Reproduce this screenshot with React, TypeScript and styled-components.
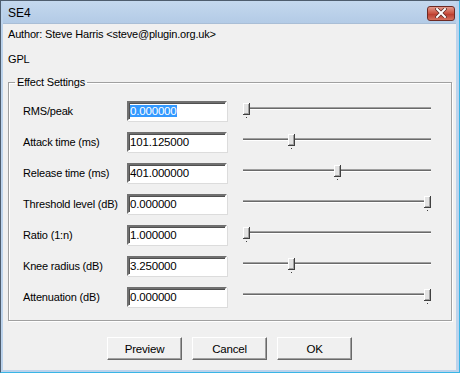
import React from "react";
import styled, { createGlobalStyle } from "styled-components";

const GlobalStyle = createGlobalStyle`
  html, body {
    margin: 0;
    padding: 0;
    background: #f0f0f0;
  }
  body {
    font-family: "Liberation Sans", Arial, sans-serif;
    font-size: 11px;
    letter-spacing: -0.18px;
    color: #000;
  }
`;

const Window = styled.div`
  width: 460px;
  height: 373px;
  box-sizing: border-box;
  display: flex;
  flex-direction: column;
  background: #bcd3ec;
  border: 1px solid #4e5d6e;
  border-right-color: #39b5e6;
  border-bottom-color: #39b5e6;
  padding: 0 3px 2px 2px;
`;

const TitleBar = styled.div`
  height: 22px;
  flex: none;
  display: flex;
  align-items: center;
  justify-content: space-between;
  padding-left: 5px;
  background: linear-gradient(#c4d8ee, #b3cbe6);
`;

const Title = styled.span`
  font-size: 12px;
  letter-spacing: 0;
  margin-top: 2px;
`;

const CloseButton = styled.button`
  width: 28px;
  height: 15px;
  margin: 2px 1px 0 0;
  padding: 0;
  display: flex;
  align-items: center;
  justify-content: center;
  border: 1px solid #6d2a24;
  border-radius: 3px;
  background: linear-gradient(#e39a8c, #c9503e 50%, #b8382a 51%, #d5715e);
`;

const Client = styled.div`
  flex: 1;
  background: #f0f0f0;
  padding: 0 0 0 5px;
  border-top: 1px solid #a9bed6;
`;

const InfoLine = styled.div`
  height: 20px;
  line-height: 20px;
  margin-bottom: 5px;
`;

const Group = styled.fieldset`
  width: 444px;
  box-sizing: border-box;
  margin: 6px 0 0 0;
  padding: 12px 0 13px 0;
  border: 1px solid #a0a0a0;
  box-shadow: 1px 1px 0 #fff, inset 1px 1px 0 #fff;
`;

const Legend = styled.legend`
  margin-left: 6px;
  padding: 0 2px;
  line-height: 14px;
`;

const Rows = styled.div`
  display: grid;
  grid-template-columns: 104px 100px 204px;
  row-gap: 11px;
  align-items: center;
  padding-left: 14px;
`;

const Label = styled.span`
  line-height: 20px;
`;

const Field = styled.div`
  height: 20px;
  box-sizing: border-box;
  background: #fff;
  border-style: solid;
  border-width: 2px;
  border-color: #707070 #fff #fff #707070;
  box-shadow: inset 1px 1px 0 #505050, 1px 1px 0 #dcdcdc;
  padding: 0 1px;
  line-height: 16px;
  font-size: 11.5px;
`;

const Selected = styled.span`
  background: #3399ff;
  color: #fff;
`;

const Slider = styled.div`
  position: relative;
  height: 20px;
  margin-left: 16px;
`;

const Track = styled.div`
  position: absolute;
  left: 0;
  right: 0;
  top: 6px;
  height: 1px;
  background: #6a6a6a;
  border-top: 1px solid #a0a0a0;
  border-bottom: 1px solid #fff;
`;

const Thumb = styled.svg`
  position: absolute;
  top: 2px;
`;

const ButtonRow = styled.div`
  display: flex;
  justify-content: center;
  gap: 10px;
  margin-top: 16px;
  padding-right: 5px;
`;

const Button = styled.button`
  width: 75px;
  height: 23px;
  box-sizing: border-box;
  font-family: "Liberation Sans", Arial, sans-serif;
  font-size: 11.5px;
  letter-spacing: -0.2px;
  background: #f0f0f0;
  border: 1px solid;
  border-color: #fff #696969 #696969 #fff;
  box-shadow: inset -1px -1px 0 #a0a0a0;
  padding: 0;
`;

type Setting = { label: string; value: string; pos: number; selected?: boolean };

const settings: Setting[] = [
  { label: "RMS/peak", value: "0.000000", pos: 0, selected: true },
  { label: "Attack time (ms)", value: "101.125000", pos: 0.249 },
  { label: "Release time (ms)", value: "401.000000", pos: 0.503 },
  { label: "Threshold level (dB)", value: "0.000000", pos: 1 },
  { label: "Ratio (1:n)", value: "1.000000", pos: 0 },
  { label: "Knee radius (dB)", value: "3.250000", pos: 0.249 },
  { label: "Attenuation (dB)", value: "0.000000", pos: 1 },
];

const ThumbIcon = ({ pos }: { pos: number }) => (
  <Thumb width="7" height="15" viewBox="0 0 7 15" style={{ left: Math.round(pos * 181) }}>
    <rect x="0" y="0" width="7" height="12" fill="#404040" />
    <rect x="0" y="0" width="6" height="11" fill="#fff" />
    <rect x="1" y="1" width="5" height="10" fill="#a0a0a0" />
    <rect x="1" y="1" width="4" height="9" fill="#e3e3e3" />
    <rect x="3" y="14" width="1" height="1" fill="#404040" />
  </Thumb>
);

const CloseIcon = () => (
  <svg width="12" height="10" viewBox="0 0 12 10">
    <path d="M2 1 L10 9 M10 1 L2 9" stroke="#5a2a24" strokeWidth="3.4" strokeLinecap="square" />
    <path d="M2 1 L10 9 M10 1 L2 9" stroke="#fff" strokeWidth="2" strokeLinecap="square" />
  </svg>
);

export default function App() {
  return (
    <>
      <GlobalStyle />
      <Window>
        <TitleBar>
          <Title>SE4</Title>
          <CloseButton aria-label="Close">
            <CloseIcon />
          </CloseButton>
        </TitleBar>
        <Client>
          <InfoLine>Author: Steve Harris &lt;steve@plugin.org.uk&gt;</InfoLine>
          <InfoLine>GPL</InfoLine>
          <Group>
            <Legend>Effect Settings</Legend>
            <Rows>
              {settings.map((s) => (
                <React.Fragment key={s.label}>
                  <Label>{s.label}</Label>
                  <Field>{s.selected ? <Selected>{s.value}</Selected> : s.value}</Field>
                  <Slider>
                    <Track />
                    <ThumbIcon pos={s.pos} />
                  </Slider>
                </React.Fragment>
              ))}
            </Rows>
          </Group>
          <ButtonRow>
            <Button>Preview</Button>
            <Button>Cancel</Button>
            <Button>OK</Button>
          </ButtonRow>
        </Client>
      </Window>
    </>
  );
}
